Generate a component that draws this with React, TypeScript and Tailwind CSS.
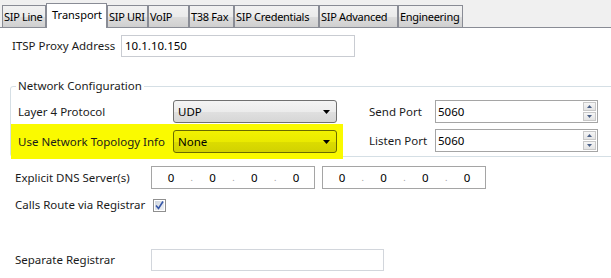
import React from "react";

function Arrow() {
  return (
    <svg width="7" height="4" viewBox="0 0 7 4">
      <path d="M0 0h7L3.5 4z" fill="#000" />
    </svg>
  );
}

function Select({ value }: { value: string }) {
  return (
    <div className="w-[164px] h-[23px] rounded-[3px] border border-[#707070] bg-[linear-gradient(to_bottom,#f4f4f4_0%,#ececec_50%,#e0e0e0_51%,#d6d6d6_100%)] flex items-center justify-between pl-[4px] pr-[6px]">
      <span className="text-[#000]">{value}</span>
      <Arrow />
    </div>
  );
}

function YellowSelect({ value }: { value: string }) {
  return (
    <div className="w-[164px] h-[23px] rounded-[3px] border border-[#6a6a00] bg-[linear-gradient(to_bottom,#f2f200_0%,#eaea00_50%,#dcdc00_51%,#d2d200_100%)] flex items-center justify-between pl-[4px] pr-[6px]">
      <span className="text-[#000]">{value}</span>
      <Arrow />
    </div>
  );
}

function Spin() {
  return (
    <div className="flex flex-col gap-[1px] mr-[1px]">
      <div className="w-[13px] h-[9px] border border-[#c8c8c8] bg-[linear-gradient(to_bottom,#f6f6f6,#e4e4e4)] flex items-center justify-center">
        <svg width="5" height="3" viewBox="0 0 5 3">
          <path d="M0 3h5L2.5 0z" fill="#4a5f86" />
        </svg>
      </div>
      <div className="w-[13px] h-[9px] border border-[#c8c8c8] bg-[linear-gradient(to_bottom,#f6f6f6,#e4e4e4)] flex items-center justify-center">
        <svg width="5" height="3" viewBox="0 0 5 3">
          <path d="M0 0h5L2.5 3z" fill="#4a5f86" />
        </svg>
      </div>
    </div>
  );
}

function PortInput({ value }: { value: string }) {
  return (
    <div className="w-[163px] h-[23px] border border-[#a5a5a5] bg-white flex items-center justify-between pl-[2px]">
      <span className="text-black">{value}</span>
      <Spin />
    </div>
  );
}

function IpBox() {
  const cells = [0, 1, 2, 3];
  return (
    <div className="w-[164px] h-[23px] border border-[#a5a5a5] bg-white flex items-center pl-[1px]">
      {cells.map((i) => (
        <React.Fragment key={i}>
          <span className="w-[37px] text-center text-black">0</span>
          {i < 3 && <span className="w-[6px] text-center text-[#9a9a9a] text-[9px]">.</span>}
        </React.Fragment>
      ))}
    </div>
  );
}

function Checkbox() {
  return (
    <div className="w-[13px] h-[13px] border border-[#8f8f8f] bg-white p-[1px] ml-[2px]">
      <div className="w-full h-full bg-[linear-gradient(135deg,#cfd6df,#eef1f5)] flex items-center justify-center">
        <svg width="9" height="9" viewBox="0 0 9 9">
          <path d="M1 4.5L3.5 7.5L8 0.5" stroke="#3657a8" strokeWidth="1.6" fill="none" />
        </svg>
      </div>
    </div>
  );
}

const tabs = [
  { name: "SIP Line", w: "w-[44px]" },
  { name: "Transport", w: "w-[61px]", active: true },
  { name: "SIP URI", w: "w-[41px]" },
  { name: "VoIP", w: "w-[41px]" },
  { name: "T38 Fax", w: "w-[45px]" },
  { name: "SIP Credentials", w: "w-[85px]" },
  { name: "SIP Advanced", w: "w-[79px]" },
  { name: "Engineering", w: "w-[65px]" },
];

export default function App() {
  return (
    <div className="w-[611px] h-[278px] bg-white overflow-hidden font-['Noto_Sans',sans-serif] text-[11.5px] text-[#1b1b1b] leading-[16px]">
      {/* Tab strip */}
      <div className="h-[28px] bg-[#f0f0f0] border-b border-[#898c95] flex items-end pl-[2px] text-[11px]">
        {tabs.map((t) =>
          t.active ? (
            <div
              key={t.name}
              className={`${t.w} h-[25px] -mb-[1px] bg-white border border-b-0 border-[#898c95] pl-[5px] pt-[3px] relative z-10 text-black whitespace-nowrap`}
            >
              {t.name}
            </div>
          ) : (
            <div
              key={t.name}
              className={`${t.w} h-[22px] bg-[linear-gradient(to_bottom,#f2f2f2_0%,#ebebeb_50%,#dddddd_51%,#cfcfcf_100%)] border border-b-0 border-[#898c95] pl-[1px] pt-[3px] text-black whitespace-nowrap overflow-hidden tracking-[-0.3px]`}
            >
              {t.name}
            </div>
          )
        )}
      </div>

      {/* ITSP row */}
      <div className="flex items-center pl-[12px] pt-[7px]">
        <span className="w-[109px]">ITSP Proxy Address</span>
        <div className="w-[234px] h-[22px] border border-[#c9ccd2] flex items-center pl-[3px] text-black">10.1.10.150</div>
      </div>

      {/* Network Configuration group */}
      <fieldset className="ml-[10px] mt-[21px] w-[620px] border border-[#d5dfe5] rounded-[3px]">
        <legend className="ml-[5px] px-[2px]">Network Configuration</legend>
        <div className="flex">
          <div className="w-[332px] flex flex-col">
            <div className="flex items-center pl-[7px] pt-[6px]">
              <span className="w-[155px]">Layer 4 Protocol</span>
              <Select value="UDP" />
            </div>
            <div className="flex items-center pl-[7px] mt-[1px] h-[35px] -mb-[3px] bg-[#fafa00] relative">
              <span className="w-[155px] whitespace-nowrap">Use Network Topology Info</span>
              <YellowSelect value="None" />
            </div>
          </div>
          <div className="flex flex-col pl-[26px] pt-[6px] gap-[6px]">
            <div className="flex items-center">
              <span className="w-[66px]">Send Port</span>
              <PortInput value="5060" />
            </div>
            <div className="flex items-center">
              <span className="w-[66px]">Listen Port</span>
              <PortInput value="5060" />
            </div>
          </div>
        </div>
      </fieldset>

      {/* Lower rows */}
      <div className="pl-[15px] pt-[9px] flex flex-col">
        <div className="flex items-center">
          <span className="w-[136px] whitespace-nowrap">Explicit DNS Server(s)</span>
          <div className="flex gap-[7px]">
            <IpBox />
            <IpBox />
          </div>
        </div>
        <div className="flex items-center h-[22px] mt-[5px]">
          <span className="w-[136px] whitespace-nowrap">Calls Route via Registrar</span>
          <Checkbox />
        </div>
        <div className="flex items-center mt-[33px]">
          <span className="w-[136px]">Separate Registrar</span>
          <div className="w-[233px] h-[22px] border border-[#d2d6dc] bg-white" />
        </div>
      </div>
    </div>
  );
}
